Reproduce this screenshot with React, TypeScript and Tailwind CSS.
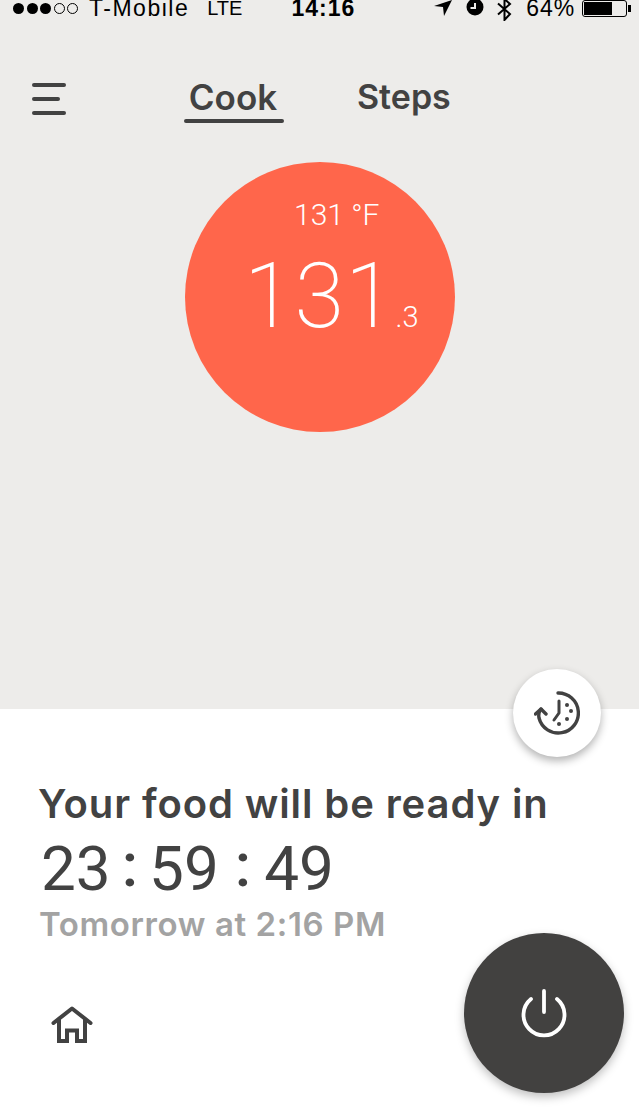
import React from 'react';

const StatusBar = () => (
    <div className="relative flex h-[17px] items-end whitespace-nowrap font-['Liberation_Sans',sans-serif] text-[23px] leading-[18px] text-black">
        <div className="mb-[3px] ml-[13px] flex items-center gap-[2.5px]">
            {[0, 1, 2].map(i => <span key={i} className="h-[11px] w-[11px] rounded-full bg-black" />)}
            {[0, 1].map(i => <span key={i} className="h-[11px] w-[11px] rounded-full border border-black" />)}
        </div>
        <span className="ml-[11px] tracking-[1.5px]">T-Mobile</span>
        <span className="ml-[18px] text-[20px]">LTE</span>
        <span className="ml-[49px] font-bold tracking-[1px]">14:16</span>
        <svg className="mb-[1px] ml-[79px] self-end" width="18" height="16" viewBox="0 0 18 16" aria-hidden="true">
            <path d="M18 0 L0 6 L9 7 L10 16 Z" fill="#000" />
        </svg>
        <svg className="ml-[13px] self-start" width="20" height="16" viewBox="0 0 20 16" aria-hidden="true">
            <circle cx="10" cy="7" r="8.5" fill="#000" />
            <path d="M10 3 V8 H5.5" stroke="#edecea" strokeWidth="2" fill="none" />
        </svg>
        <svg className="ml-[11px] self-start" width="17" height="21" viewBox="0 0 17 21" aria-hidden="true">
            <path d="M2 3.5 L14 14 L8.5 20 V-1 L14 4 L2 14.5" stroke="#000" strokeWidth="2" fill="none" />
        </svg>
        <span className="ml-[13px] tracking-[1px]">64%</span>
        <div className="ml-[7px] flex items-center">
            <div className="h-[17px] w-[45px] rounded-[3px] border border-black p-[1px]">
                <div className="h-full w-[28px] bg-black" />
            </div>
            <div className="ml-[1px] h-[7px] w-[3px] bg-black" />
        </div>
    </div>
);

const HistoryIcon = () => (
    <svg width="46" height="44" viewBox="0 0 46 44" fill="none" stroke="#424242" strokeLinecap="round" strokeLinejoin="round" aria-hidden="true">
        <path d="M24 2 A20 20 0 1 1 5 27 Q4 22 7 18" strokeWidth="3.4" />
        <path d="M1.5 23 L7 18 L12 23" strokeWidth="3.4" />
        <path d="M25 10 V22 L20 29" strokeWidth="3" />
        <circle cx="33" cy="14" r="2" fill="#424242" stroke="none" />
        <circle cx="37" cy="20" r="2" fill="#424242" stroke="none" />
        <circle cx="33" cy="28" r="2" fill="#424242" stroke="none" />
        <circle cx="25" cy="33" r="2" fill="#424242" stroke="none" />
    </svg>
);

const HomeIcon = () => (
    <svg width="42" height="38" viewBox="0 0 42 38" fill="none" stroke="#424242" strokeWidth="4" strokeLinecap="round" strokeLinejoin="round" aria-hidden="true">
        <path d="M2.5 17 L21 2.5 L39.5 17" />
        <path d="M8 13 V35 H16 V24.5 H26 V35 H34 V13" strokeLinecap="butt" strokeLinejoin="miter" />
    </svg>
);

const PowerIcon = () => (
    <svg width="46" height="50" viewBox="0 0 46 50" fill="none" stroke="#fff" strokeWidth="3.8" strokeLinecap="round" aria-hidden="true">
        <path d="M23 3 V24" />
        <path d="M10 11 A20.5 20.5 0 1 0 36 11" />
    </svg>
);

export default function App() {
    return (
        <div className="relative h-[1114px] w-[639px] overflow-hidden bg-white font-['Inter',sans-serif]">
            {/* TOP SECTION */}
            <div className="flex h-[709px] flex-col bg-[#edecea]">
                <StatusBar />

                <div className="mt-[61px] flex items-start">
                    <div className="ml-[32px] mt-[5px] flex w-[34px] flex-col gap-[10px]">
                        <span className="h-[4px] w-full rounded-full bg-[#424242]" />
                        <span className="h-[4px] w-[28px] rounded-full bg-[#424242]" />
                        <span className="h-[4px] w-full rounded-full bg-[#424242]" />
                    </div>
                    <div className="ml-[118px] flex w-[100px] flex-col items-center pr-[2px]">
                        <span className="text-[35px] font-semibold leading-[38px] text-[#424242]">Cook</span>
                        <span className="mr-[-2px] mt-[3px] h-[4px] w-[100px] rounded-full bg-[#424242]" />
                    </div>
                    <span className="ml-[73px] text-[34px] font-semibold leading-[38px] text-[#424242]">Steps</span>
                </div>

                <div className="ml-[185px] mt-[39px] flex h-[270px] w-[270px] flex-col rounded-full bg-[#ff664b] font-['Roboto',sans-serif] text-white">
                    <span className="ml-[109px] mt-[36px] text-[30px] font-light leading-[34px]">131 °F</span>
                    <div className="ml-[59px] mt-[19px] flex items-baseline">
                        <span className="text-[90px] font-extralight leading-[92px] tracking-[1px]">131</span>
                        <span className="text-[29px] font-light">.3</span>
                    </div>
                </div>
            </div>

            {/* BOTTOM SECTION */}
            <div className="flex flex-col pl-[38px] pt-[73px]">
                <h1 className="text-[40px] font-semibold leading-[44px] tracking-[0.9px] text-[#424242]">Your food will be ready in</h1>
                <div className="ml-[3px] mt-[11px] flex items-center font-['Roboto',sans-serif] text-[62px] leading-[64px] text-[#424242]">
                    <span>23</span>
                    <span className="mx-[11px] -translate-y-[4px] font-medium">:</span>
                    <span>59</span>
                    <span className="ml-[16px] mr-[13px] -translate-y-[4px] font-medium">:</span>
                    <span>49</span>
                </div>
                <p className="ml-[1px] mt-[4px] text-[33px] font-semibold leading-[38px] tracking-[0.6px] text-[#a3a3a3]">Tomorrow at 2:16 PM</p>
                <div className="ml-[13px] mt-[63px]">
                    <HomeIcon />
                </div>
            </div>

            {/* FLOATING BUTTONS */}
            <button className="absolute left-[513px] top-[669px] flex h-[88px] w-[88px] items-center justify-center rounded-full bg-white shadow-[0_4px_8px_rgba(0,0,0,0.3)]">
                <HistoryIcon />
            </button>
            <button className="absolute left-[464px] top-[933px] flex h-[160px] w-[160px] items-center justify-center rounded-full bg-[#424140] shadow-[0_4px_10px_rgba(0,0,0,0.25)]">
                <PowerIcon />
            </button>
        </div>
    );
}
